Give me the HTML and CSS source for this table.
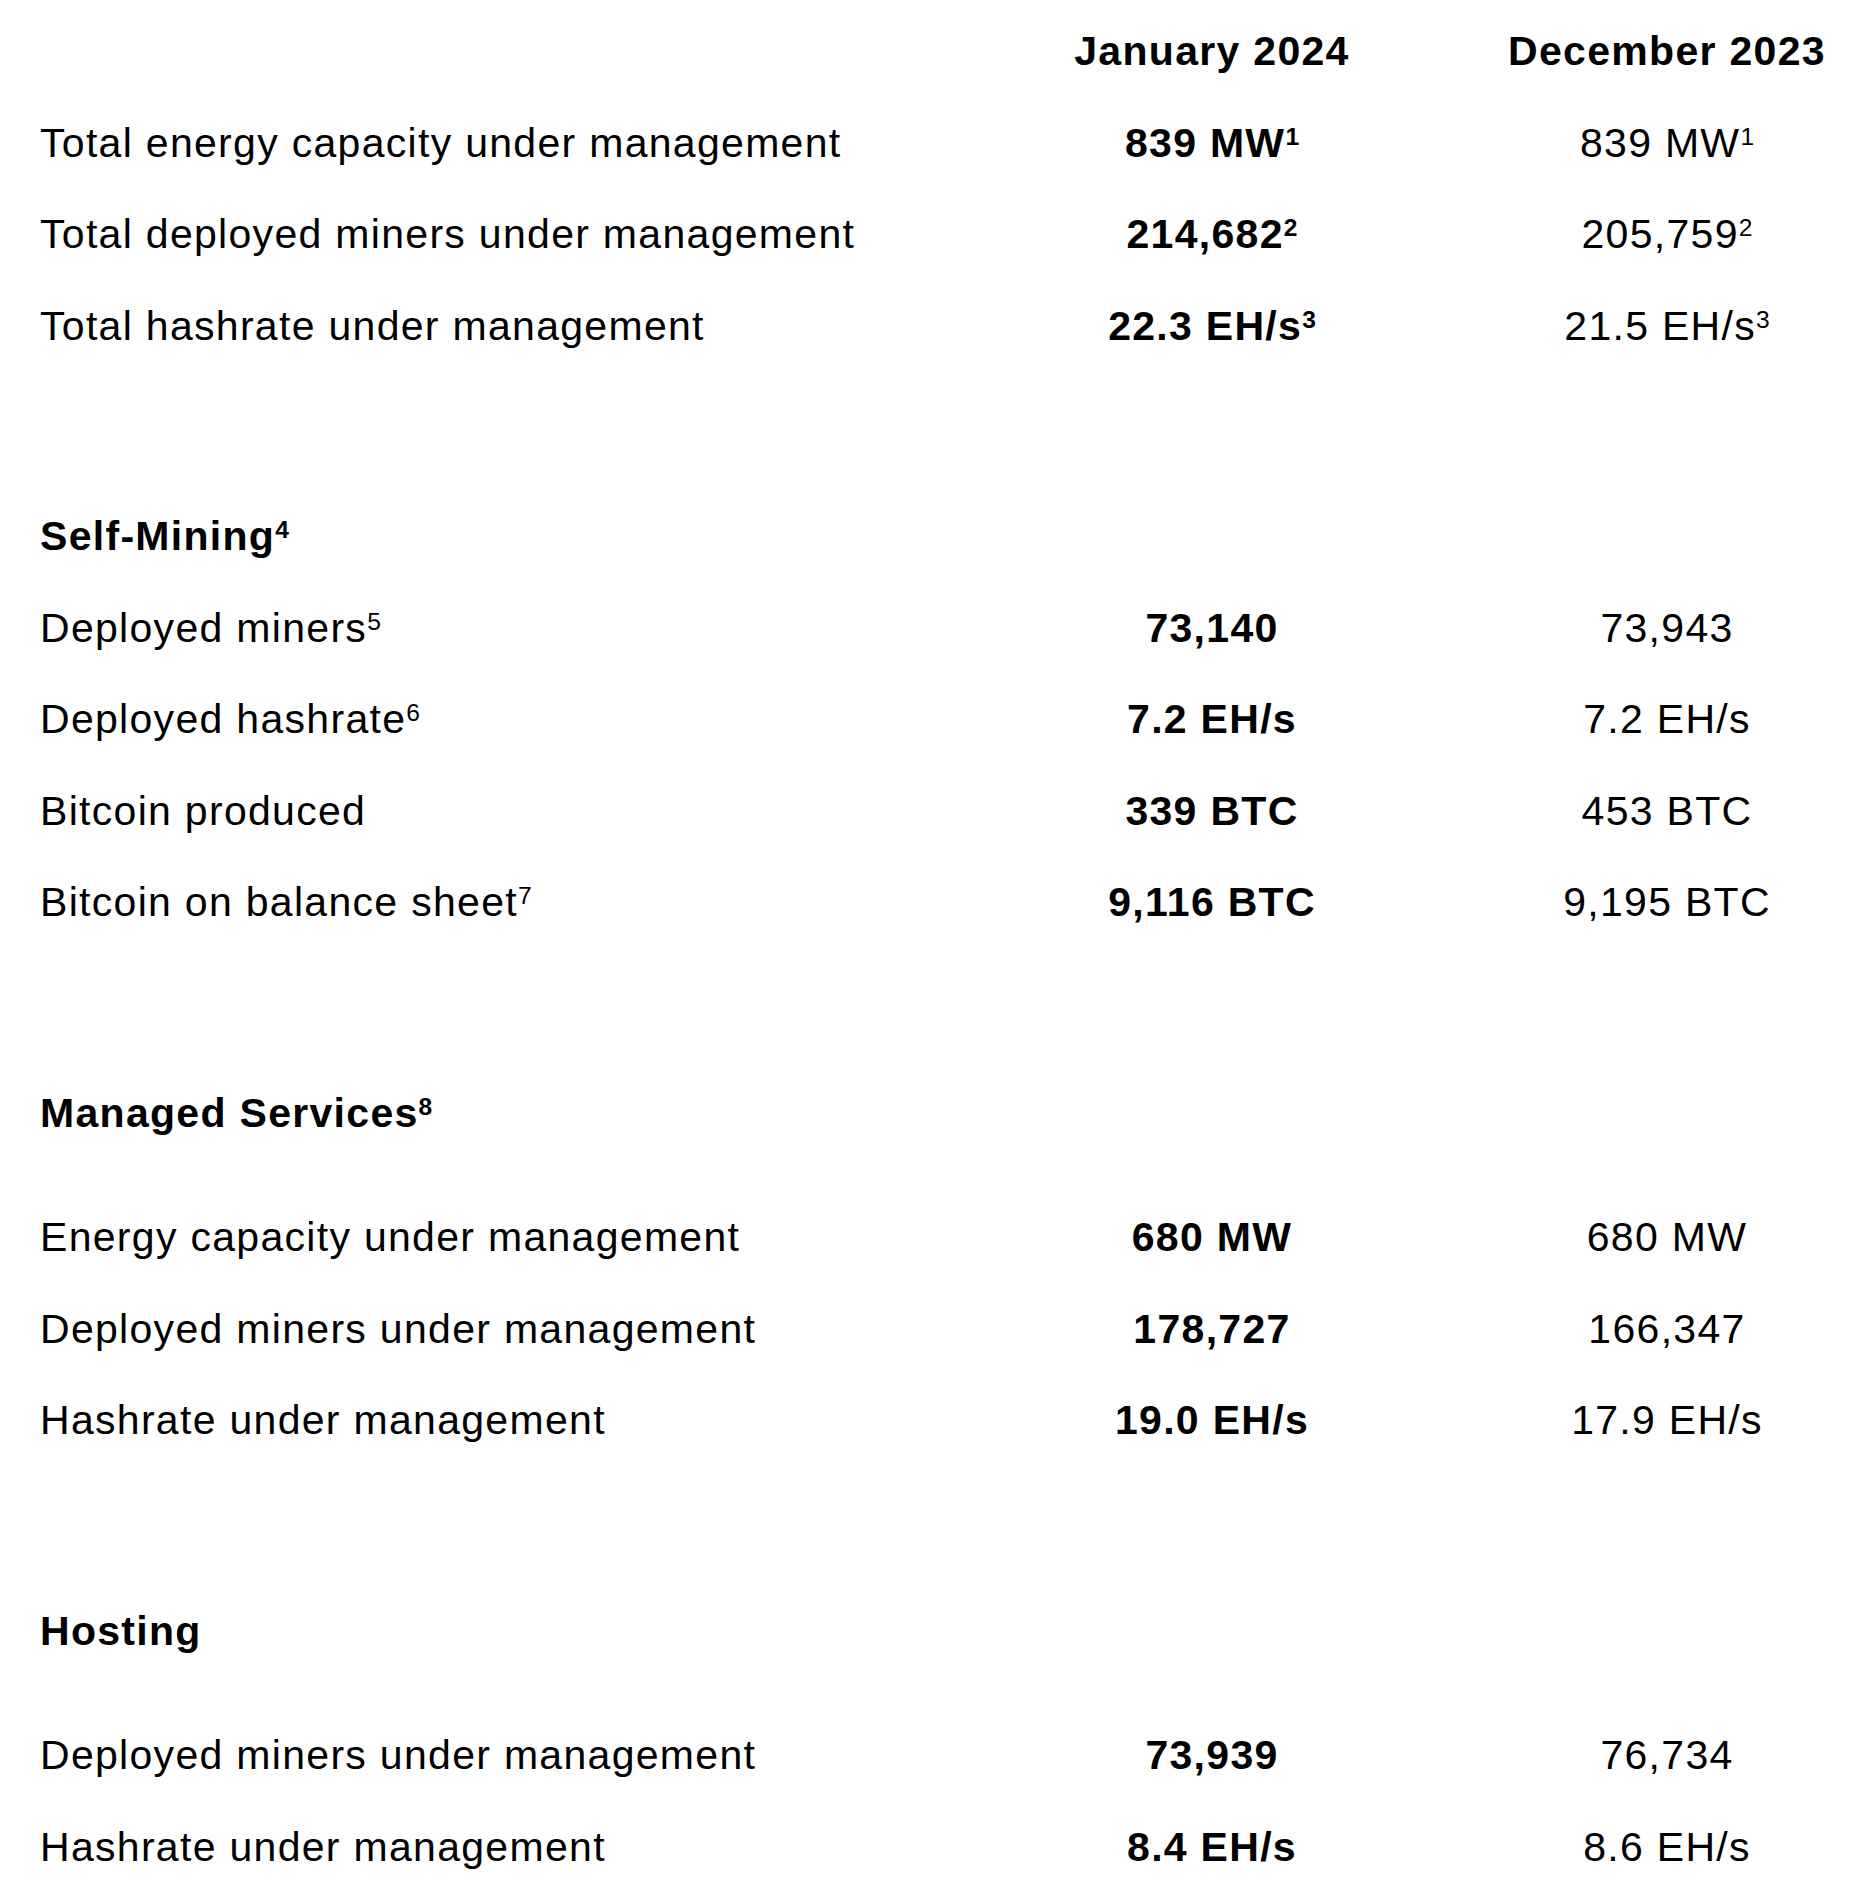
FILE: index.html
```html
<!DOCTYPE html>
<html lang="en">
<head>
    <meta charset="UTF-8">
    <meta name="viewport" content="width=device-width, initial-scale=1.0">
    <title>Monthly Operating Update</title>
    <link rel="stylesheet" href="styles.css">
</head>
<body>

    <div class="report">

        <!-- Totals -->
        <div class="row head">
            <div class="label"></div>
            <div class="value">January 2024</div>
            <div class="value">December 2023</div>
        </div>
        <div class="row">
            <div class="label">Total energy capacity under management</div>
            <div class="value current">839 MW<sup>1</sup></div>
            <div class="value">839 MW<sup>1</sup></div>
        </div>
        <div class="row">
            <div class="label">Total deployed miners under management</div>
            <div class="value current">214,682<sup>2</sup></div>
            <div class="value">205,759<sup>2</sup></div>
        </div>
        <div class="row">
            <div class="label">Total hashrate under management</div>
            <div class="value current">22.3 EH/s<sup>3</sup></div>
            <div class="value">21.5 EH/s<sup>3</sup></div>
        </div>

        <!-- Self-Mining -->
        <div class="section">
            <div class="row">
                <div class="label title">Self-Mining<sup>4</sup></div>
            </div>
            <div class="row">
                <div class="label">Deployed miners<sup>5</sup></div>
                <div class="value current">73,140</div>
                <div class="value">73,943</div>
            </div>
            <div class="row">
                <div class="label">Deployed hashrate<sup>6</sup></div>
                <div class="value current">7.2 EH/s</div>
                <div class="value">7.2 EH/s</div>
            </div>
            <div class="row">
                <div class="label">Bitcoin produced</div>
                <div class="value current">339 BTC</div>
                <div class="value">453 BTC</div>
            </div>
            <div class="row">
                <div class="label">Bitcoin on balance sheet<sup>7</sup></div>
                <div class="value current">9,116 BTC</div>
                <div class="value">9,195 BTC</div>
            </div>
        </div>

        <!-- Managed Services -->
        <div class="section">
            <div class="row spaced">
                <div class="label title">Managed Services<sup>8</sup></div>
            </div>
            <div class="row">
                <div class="label">Energy capacity under management</div>
                <div class="value current">680 MW</div>
                <div class="value">680 MW</div>
            </div>
            <div class="row">
                <div class="label">Deployed miners under management</div>
                <div class="value current">178,727</div>
                <div class="value">166,347</div>
            </div>
            <div class="row">
                <div class="label">Hashrate under management</div>
                <div class="value current">19.0 EH/s</div>
                <div class="value">17.9 EH/s</div>
            </div>
        </div>

        <!-- Hosting -->
        <div class="section">
            <div class="row spaced">
                <div class="label title">Hosting</div>
            </div>
            <div class="row">
                <div class="label">Deployed miners under management</div>
                <div class="value current">73,939</div>
                <div class="value">76,734</div>
            </div>
            <div class="row">
                <div class="label">Hashrate under management</div>
                <div class="value current">8.4 EH/s</div>
                <div class="value">8.6 EH/s</div>
            </div>
        </div>

    </div>

</body>
</html>
```

FILE: styles.css
```css
body {
    font-family: "Liberation Sans", Arial, sans-serif;
    font-size: 41px;
    letter-spacing: 1.3px;
    color: #000;
    background: #fff;
    margin: 0;
}

.report {
    padding: 6px 9px 0 40px;
}

.row {
    display: grid;
    grid-template-columns: 1fr 380px 380px;
    column-gap: 75px;
    align-items: center;
    height: 91.5px;
    white-space: nowrap;
}

.row.spaced {
    margin-bottom: 33px;
}

.section {
    margin-top: 119px;
}

.value {
    text-align: center;
}

.head .value,
.value.current,
.title {
    font-weight: bold;
}

/* footnote marks sit flush with the cap line */
sup {
    font-size: 0.6em;
    vertical-align: 0.5em;
    line-height: 0;
    letter-spacing: 0;
}
```
